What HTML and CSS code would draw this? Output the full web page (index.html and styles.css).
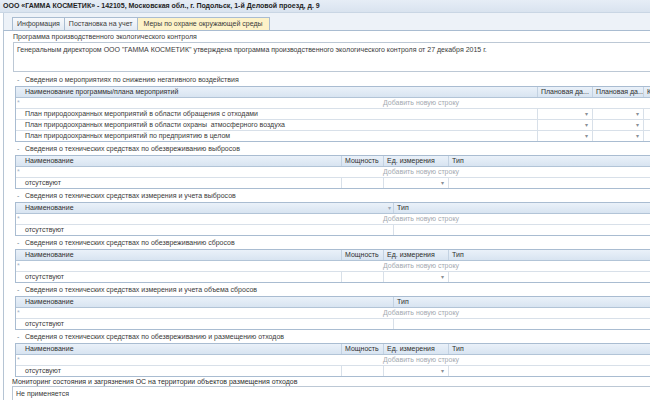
FILE: index.html
```html
<!DOCTYPE html>
<html lang="ru">
<head>
<meta charset="utf-8">
<title>ГАММА КОСМЕТИК</title>
<link rel="stylesheet" href="styles.css">
</head>
<body>
<div class="title">ООО «ГАММА КОСМЕТИК» - 142105, Московская обл., г. Подольск, 1-й Деловой проезд, д. 9</div>
<div class="tabs">
  <div class="tab">Информация</div>
  <div class="tab">Постановка на учет</div>
  <div class="tab active">Меры по охране окружающей среды</div>
</div>
<div class="panel">
  <div class="field-label">Программа производственного экологического контроля</div>
  <div class="textbox">Генеральным директором ООО "ГАММА КОСМЕТИК" утверждена программа производственного экологического контроля от 27 декабря 2015 г.</div>

  <div class="sec-title first"><span class="dash">-</span>Сведения о мероприятиях по снижению негативного воздействия</div>
  <div class="grid">
    <div class="row head">
      <div class="c name n1">Наименование программы/плана мероприятий</div>
      <div class="c date1">Плановая да...</div>
      <div class="c date2">Плановая да...</div>
      <div class="c rest">К</div>
    </div>
    <div class="row add"><span class="star">*</span><span class="addtext">Добавить новую строку</span></div>
    <div class="row">
      <div class="c name n1">План природоохранных мероприятий в области обращения с отходами</div>
      <div class="c date1 drop">▾</div>
      <div class="c date2 drop">▾</div>
      <div class="c rest"></div>
    </div>
    <div class="row">
      <div class="c name n1">План природоохранных мероприятий в области охраны &nbsp;атмосферного воздуха</div>
      <div class="c date1 drop">▾</div>
      <div class="c date2 drop">▾</div>
      <div class="c rest"></div>
    </div>
    <div class="row">
      <div class="c name n1">План природоохранных мероприятий по предприятию в целом</div>
      <div class="c date1 drop">▾</div>
      <div class="c date2 drop">▾</div>
      <div class="c rest"></div>
    </div>
  </div>

  <div class="sec-title"><span class="dash">-</span>Сведения о технических средствах по обезвреживанию выбросов</div>
  <div class="grid">
    <div class="row head">
      <div class="c name n2">Наименование</div>
      <div class="c power">Мощность</div>
      <div class="c unit">Ед. измерения</div>
      <div class="c rest">Тип</div>
    </div>
    <div class="row add"><span class="star">*</span><span class="addtext">Добавить новую строку</span></div>
    <div class="row">
      <div class="c name n2">отсутсвуют</div>
      <div class="c power"></div>
      <div class="c unit drop">▾</div>
      <div class="c rest"></div>
    </div>
  </div>

  <div class="sec-title"><span class="dash">-</span>Сведения о технических средствах измерения и учета выбросов</div>
  <div class="grid">
    <div class="row head">
      <div class="c name n3 sorted">Наименование<span class="sort">▾</span></div>
      <div class="c rest nosep">Тип</div>
    </div>
    <div class="row add"><span class="star">*</span><span class="addtext">Добавить новую строку</span></div>
    <div class="row">
      <div class="c name n3">отсутствуют</div>
      <div class="c rest"></div>
    </div>
  </div>

  <div class="sec-title"><span class="dash">-</span>Сведения о технических средствах по обезвреживанию сбросов</div>
  <div class="grid">
    <div class="row head">
      <div class="c name n2">Наименование</div>
      <div class="c power">Мощность</div>
      <div class="c unit">Ед. измерения</div>
      <div class="c rest">Тип</div>
    </div>
    <div class="row add"><span class="star">*</span><span class="addtext">Добавить новую строку</span></div>
    <div class="row">
      <div class="c name n2">отсутствуют</div>
      <div class="c power"></div>
      <div class="c unit drop">▾</div>
      <div class="c rest"></div>
    </div>
  </div>

  <div class="sec-title"><span class="dash">-</span>Сведения о технических средствах измерения и учета объема сбросов</div>
  <div class="grid">
    <div class="row head">
      <div class="c name n3">Наименование</div>
      <div class="c rest nosep">Тип</div>
    </div>
    <div class="row add"><span class="star">*</span><span class="addtext">Добавить новую строку</span></div>
    <div class="row">
      <div class="c name n3">отсутствуют</div>
      <div class="c rest"></div>
    </div>
  </div>

  <div class="sec-title"><span class="dash">-</span>Сведения о технических средствах по обезвреживанию и размещению отходов</div>
  <div class="grid">
    <div class="row head">
      <div class="c name n2">Наименование</div>
      <div class="c power">Мощность</div>
      <div class="c unit">Ед. измерения</div>
      <div class="c rest">Тип</div>
    </div>
    <div class="row add"><span class="star">*</span><span class="addtext">Добавить новую строку</span></div>
    <div class="row">
      <div class="c name n2">отсутсвуют</div>
      <div class="c power"></div>
      <div class="c unit drop">▾</div>
      <div class="c rest"></div>
    </div>
  </div>

  <div class="field-label mon">Мониторинг состояния и загрязнения ОС на территории объектов размещения отходов</div>
  <div class="textbox mon-box">Не применяется</div>
</div>
</body>
</html>
```

FILE: styles.css
```css
html, body {
  margin: 0;
  padding: 0;
  width: 650px;
  height: 400px;
  overflow: hidden;
  background: #ffffff;
}

body {
  font-family: "Liberation Sans", Arial, sans-serif;
  font-size: 7px;
  color: #3a3a3a;
}

.title {
  height: 13px;
  line-height: 12px;
  padding-left: 3px;
  font-weight: bold;
  font-size: 7px;
  color: #1e1e1e;
  white-space: nowrap;
  overflow: hidden;
  background: linear-gradient(#e6edf6, #d9e3ef);
  border-bottom: 1px solid #c9d6e4;
  box-sizing: border-box;
}

.tabs {
  display: flex;
  height: 17px;
  box-sizing: border-box;
  padding: 4px 0 0 8px;
  margin-left: 3px;
  border-left: 1px solid #c3d0de;
  background: #edf2f8;
}

.tab {
  height: 13px;
  line-height: 12px;
  box-sizing: border-box;
  padding: 0 4px;
  border: 1px solid #a9bcd1;
  border-right: none;
  border-bottom: none;
  background: linear-gradient(#f7f9fc, #e3eaf3);
  color: #3a3a3a;
  white-space: nowrap;
}

.tab.active {
  border-right: 1px solid #a9bcd1;
  background: #fdf2c8;
  padding: 0 6px;
}

.panel {
  margin-left: 3px;
  border-left: 1px solid #b5c4d4;
  border-top: 1px solid #a9bcd1;
  overflow: hidden;
}

.field-label {
  height: 11px;
  line-height: 11px;
  padding-left: 9px;
  white-space: nowrap;
}

.textbox {
  margin-left: 9px;
  height: 30px;
  box-sizing: border-box;
  border: 1px solid #bcc8d5;
  border-right: none;
  padding: 2px 0 0 3px;
  line-height: 9px;
  white-space: nowrap;
  overflow: hidden;
}

.sec-title {
  height: 13px;
  line-height: 13px;
  padding-left: 13px;
  white-space: nowrap;
}

.sec-title.first {
  margin-top: 1px;
}

.dash {
  display: inline-block;
  width: 8px;
  color: #6b7b8c;
}

.grid {
  margin-left: 11px;
  border: 1px solid #a9bcd1;
  border-right: none;
  overflow: hidden;
}

.row {
  display: flex;
  height: 11px;
  box-sizing: border-box;
  border-bottom: 1px solid #d8e0e9;
  line-height: 10px;
  white-space: nowrap;
}

.row:last-child {
  border-bottom: none;
  height: 10px;
}

.row.head {
  background: linear-gradient(#eaf1f9, #d8e4f1);
  border-bottom: 1px solid #b2c4d7;
  color: #2e2e2e;
}

.c {
  box-sizing: border-box;
  overflow: hidden;
  flex: none;
}

.c + .c {
  border-left: 1px solid #d8e0e9;
  padding-left: 3px;
}

.head .c + .c {
  border-left-color: #c3d2e2;
}

.c.nosep {
  border-left-color: transparent;
}

.name {
  padding-left: 9px;
}

.n1 { width: 521px; }
.n2 { width: 325px; }
.n3 { width: 377px; }

.date1 { width: 55px; }
.date2 { width: 51px; }
.power { width: 42px; }
.unit { width: 65px; }
.rest { flex: 1; min-width: 0; }

.drop {
  display: flex;
  justify-content: flex-end;
  padding-right: 4px;
  color: #8a8f96;
  font-size: 6px;
}

.sorted {
  display: flex;
  justify-content: space-between;
  padding-right: 2px;
}

.sort {
  color: #9aa7b5;
  font-size: 6px;
}

.row.add {
  color: #a3a9b0;
}

.star {
  display: inline-block;
  width: 8px;
  padding-left: 1px;
  color: #9fb3c8;
}

.addtext {
  margin-left: 358px;
}

.field-label.mon {
  height: 9px;
  line-height: 9px;
  padding-left: 8px;
  color: #2e2e2e;
}

.textbox.mon-box {
  margin-left: 8px;
  height: 14px;
  border-bottom: none;
  padding-top: 2px;
}
```
